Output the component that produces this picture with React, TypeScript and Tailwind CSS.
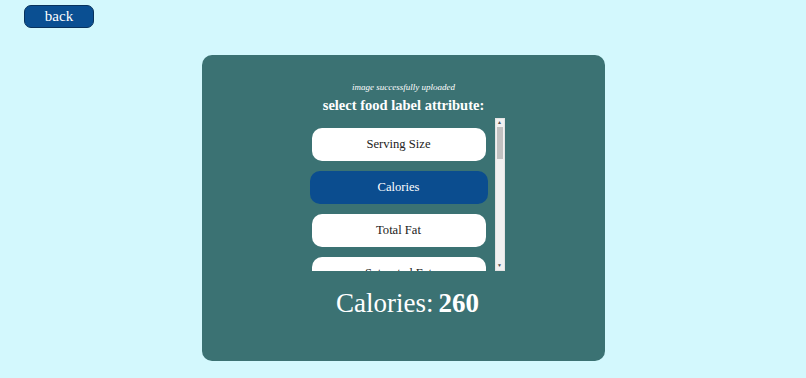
const attributes = ["Serving Size", "Calories", "Total Fat", "Saturated Fat"];

function FakeScrollbar() {
  return (
    <div className="flex flex-col w-[10px] bg-[#f1f1f1] border border-[#e4e4e4]">
      <div className="h-[8px] flex items-center justify-center text-[5px] leading-none text-[#505050]">▲</div>
      <div className="mx-[1px] h-[32px] bg-[#c1c1c1]" />
      <div className="flex-1" />
      <div className="h-[8px] flex items-center justify-center text-[5px] leading-none text-[#505050]">▼</div>
    </div>
  );
}

export default function App() {
  const selected = "Calories";

  return (
    <div className="min-h-[378px] w-full bg-[#d3f8fd] font-['Liberation_Serif',serif]">
      <div className="pt-[4px] pl-[24px]">
        <button className="w-[70px] h-[23px] rounded-[7px] bg-[#0a4f92] border border-[#08325c] text-white text-[15px] leading-none">
          back
        </button>
      </div>

      <div className="mt-[27px] ml-[202px] w-[403px] h-[306px] rounded-[10px] bg-[#3b7273] flex flex-col items-center">
        <p className="mt-[28px] text-[9px] italic text-white leading-none">image successfully uploaded</p>
        <h2 className="mt-[6px] text-[14.5px] font-bold text-white leading-none">select food label attribute:</h2>

        <div className="mt-[5px] ml-[4px] flex gap-[4px] h-[153px]">
          <div className="w-[184px] overflow-hidden flex flex-col items-center gap-[10px] pt-[10px]">
            {attributes.map((a) => (
              <div
                key={a}
                className={
                  a === selected
                    ? "shrink-0 w-[178px] h-[33px] rounded-[10px] bg-[#0b4d8f] text-white text-[12.6px] flex items-center justify-center"
                    : "shrink-0 w-[174px] h-[33px] rounded-[10px] bg-white text-[#222] text-[12.6px] flex items-center justify-center"
                }
              >
                {a}
              </div>
            ))}
          </div>
          <FakeScrollbar />
        </div>

        <div className="mt-[19px] ml-[8px] text-white text-[27px] leading-none flex items-baseline gap-[5px]">
          <span>Calories:</span>
          <span className="font-bold">260</span>
        </div>
      </div>
    </div>
  );
}
